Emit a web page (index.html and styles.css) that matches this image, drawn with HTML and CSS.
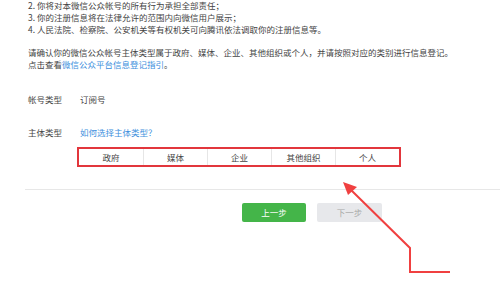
FILE: index.html
```html
<!DOCTYPE html>
<html lang="zh-CN">
<head>
    <meta charset="UTF-8">
    <title>注册信息登记</title>
    <link rel="stylesheet" href="styles.css">
</head>
<body>
<div class="page">
    <ul class="rules">
        <li>2. 你将对本微信公众帐号的所有行为承担全部责任；</li>
        <li>3. 你的注册信息将在法律允许的范围内向微信用户展示；</li>
        <li>4. 人民法院、检察院、公安机关等有权机关可向腾讯依法调取你的注册信息等。</li>
    </ul>
    <p class="tip">请确认你的微信公众帐号主体类型属于政府、媒体、企业、其他组织或个人，并请按照对应的类别进行信息登记。<br>点击查看<a href="#">微信公众平台信息登记指引</a>。</p>

    <div class="row first">
        <span class="label">帐号类型</span>
        <span class="value">订阅号</span>
    </div>
    <div class="row">
        <span class="label">主体类型</span>
        <a class="value" href="#">如何选择主体类型？</a>
    </div>
    <div class="types">
        <span>政府</span>
        <span>媒体</span>
        <span>企业</span>
        <span>其他组织</span>
        <span>个人</span>
    </div>
</div>
<div class="line"></div>
<div class="btns">
    <span class="btn prev">上一步</span>
    <span class="btn next">下一步</span>
</div>

<!-- 标注箭头 -->
<svg class="arrow" width="500" height="295" viewBox="0 0 500 295">
    <polyline points="450,272 410,272 410,248 350,189" fill="none" stroke="#f04040" stroke-width="2"/>
    <polygon points="343,182 357,187 348,195" fill="#f04040"/>
</svg>
</body>
</html>
```

FILE: styles.css
```css
*{
    margin: 0;
    padding: 0;
}
body{
    font-family: "Noto Sans CJK SC", "Liberation Sans", sans-serif;
    font-size: 8.5px;
    color: #444;
    background: #fff;
    overflow: hidden;
}
a{
    color: #3d8fdd;
    text-decoration: none;
}
.page{
    padding-left: 28px;
}
.rules{
    list-style: none;
    margin-top: -1px;
    line-height: 12px;
}
.tip{
    margin-top: 11px;
    line-height: 12px;
}
.row{
    display: flex;
    line-height: 12px;
    margin-top: 21px;
}
.row.first{
    margin-top: 23px;
}
.row .label{
    width: 52px;
}
.types{
    display: grid;
    grid-template-columns: repeat(5, 1fr);
    width: 320px;
    height: 16px;
    margin: 9px 0 0 49px;
    border: 2px solid #e2363c;
    line-height: 16px;
    text-align: center;
}
.types span{
    border-left: 1px solid #e6e6e6;
}
.types span:first-child{
    border-left: none;
}
.line{
    height: 1px;
    margin: 22px 0 0 25px;
    background: #e7e7e7;
}
.btns{
    display: flex;
    gap: 11px;
    margin: 13px 0 0 242px;
}
.btn{
    width: 64px;
    height: 19px;
    line-height: 19px;
    text-align: center;
    border-radius: 2px;
}
.prev{
    background: #44b549;
    color: #fff;
}
.next{
    width: 65px;
    background: #e7e8eb;
    color: #a8a8a8;
}
.arrow{
    position: absolute;
    left: 0;
    top: 0;
}
```
